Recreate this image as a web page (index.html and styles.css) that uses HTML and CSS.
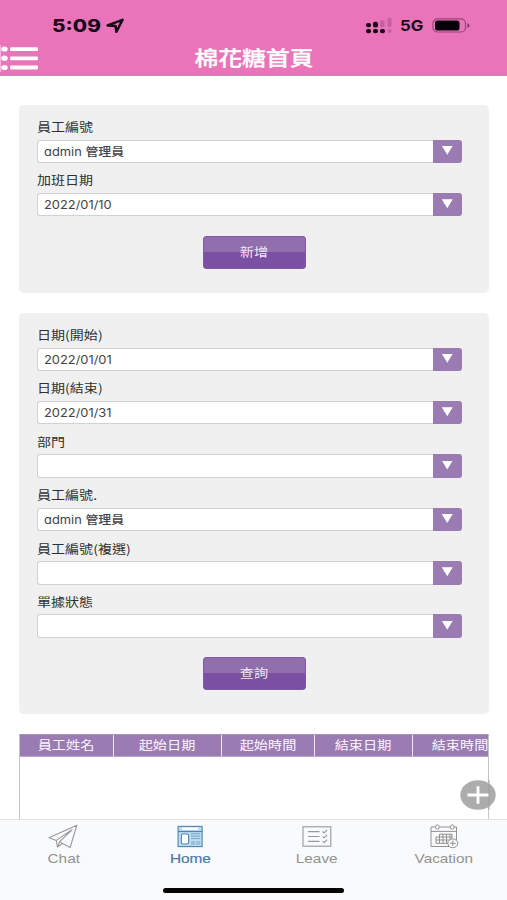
FILE: index.html
```html
<!DOCTYPE html>
<html lang="zh-Hant">
<head>
<meta charset="utf-8">
<meta name="viewport" content="width=device-width, initial-scale=1">
<title>棉花糖首頁</title>
<link rel="stylesheet" href="styles.css">
</head>
<body>
<div class="app">
  <header class="header">
    <div class="status">
      <span class="clock"><span class="wide">5:09</span></span>
      <svg class="location" width="20" height="16" viewBox="0 0 20 16"><path d="M1.6 7.4 16.6 1.8 10.4 13.8 9.6 8Z" fill="none" stroke="#180818" stroke-width="2.5" stroke-linejoin="round"/></svg>
      <svg class="signal" width="27" height="16" viewBox="0 0 27 16">
        <g fill="#180818"><rect x="0" y="5" width="5" height="4.2" rx="2"/><rect x="7" y="3.8" width="5" height="5.6" rx="2"/><rect x="0" y="11" width="5" height="4.2" rx="2"/><rect x="7" y="11" width="5" height="4.2" rx="2"/><rect x="14" y="11" width="5" height="4.2" rx="2"/></g>
        <g fill="#c660a2"><rect x="14" y="2.2" width="4.6" height="7" rx="1.5"/><rect x="21.5" y="0" width="4" height="9" rx="1.5"/><rect x="21.5" y="11" width="4" height="4" rx="2"/></g>
      </svg>
      <span class="network"><span class="wide">5G</span></span>
      <svg class="battery" width="38" height="15" viewBox="0 0 38 15"><rect x="1" y=".8" width="32.5" height="13.2" rx="4.5" fill="none" stroke="#9c4279" stroke-width="1.2"/><rect x="3" y="2.6" width="24.5" height="9.8" rx="2.5" fill="#08000a"/><path d="M35.5 5v5q2-1 2-2.5T35.5 5Z" fill="#7c3460"/></svg>
    </div>
    <div class="titlebar">
      <svg class="menu" width="38" height="27" viewBox="0 0 38 27"><path d="M.6 0v27" stroke="#f6bfe0"/><g fill="#fff"><ellipse cx="4.5" cy="4" rx="3.2" ry="2.6"/><ellipse cx="4.5" cy="13.2" rx="3.2" ry="2.6"/><ellipse cx="4.5" cy="22.5" rx="3.2" ry="2.6"/><rect x="10" y="2.2" width="28" height="3.8" rx="1.3"/><rect x="10" y="11.4" width="28" height="3.8" rx="1.3"/><rect x="10" y="20.6" width="28" height="3.8" rx="1.3"/></g></svg>
      <h1 class="title">棉花糖首頁</h1>
    </div>
  </header>
  <main class="content">
    <section class="panel panel-add">
      <div class="field"><div class="label">員工編號</div><div class="select"><div class="value"><span>admin <b>管理員</b></span></div><div class="toggle"></div></div></div>
      <div class="field"><div class="label">加班日期</div><div class="select"><div class="value"><span>2022/01/10</span></div><div class="toggle"></div></div></div>
      <button class="action"><span class="wide">新增</span></button>
    </section>
    <section class="panel panel-search">
      <div class="field"><div class="label">日期(開始)</div><div class="select"><div class="value"><span>2022/01/01</span></div><div class="toggle"></div></div></div>
      <div class="field"><div class="label">日期(結束)</div><div class="select"><div class="value"><span>2022/01/31</span></div><div class="toggle"></div></div></div>
      <div class="field"><div class="label">部門</div><div class="select"><div class="value"></div><div class="toggle"></div></div></div>
      <div class="field"><div class="label">員工編號.</div><div class="select"><div class="value"><span>admin <b>管理員</b></span></div><div class="toggle"></div></div></div>
      <div class="field"><div class="label">員工編號(複選)</div><div class="select"><div class="value"></div><div class="toggle"></div></div></div>
      <div class="field"><div class="label">單據狀態</div><div class="select"><div class="value"></div><div class="toggle"></div></div></div>
      <button class="action"><span class="wide">查詢</span></button>
    </section>
    <section class="table">
      <div class="row">
        <div class="cell"><span class="wide">員工姓名</span></div>
        <div class="cell"><span class="wide">起始日期</span></div>
        <div class="cell"><span class="wide">起始時間</span></div>
        <div class="cell"><span class="wide">結束日期</span></div>
        <div class="cell"><span class="wide">結束時間</span></div>
      </div>
    </section>
    <svg class="add" width="36" height="30" viewBox="0 0 36 30"><ellipse cx="18" cy="15" rx="17.7" ry="14.7" fill="#acacac"/><path d="M29 0v30" stroke="#999" stroke-width=".8"/><path d="M7.5 15h21M18 6.3v17.4" stroke="#fff" stroke-width="2.9"/></svg>
  </main>
  <footer class="footer">
    <nav class="tabs">
      <div class="tab">
        <svg width="30" height="26" viewBox="0 0 30 26" fill="none" stroke="#999" stroke-width="1.1" stroke-linejoin="round"><path d="M1 13.8 28.8 1.2 22.2 23.5 14.5 19.5 9.5 23 8.3 16.4ZM8.3 16.4 24 5.8 11.7 17.6 9.5 23M11.7 17.6 14.5 19.5"/></svg>
        <span class="wide">Chat</span>
      </div>
      <div class="tab active">
        <svg width="30" height="26" viewBox="0 0 30 26"><rect x="3.1" y="2.4" width="24" height="20.2" fill="#bcdcf2" stroke="#4f83b1" stroke-width="1.1"/><path d="M7 4.7h16" stroke="#fff" stroke-width="2.2"/><path d="M3 7.5h24.5" stroke="#4f83b1" stroke-width="1.2"/><rect x="6.4" y="10" width="7.2" height="10" rx="1.4" fill="#fff" stroke="#4f83b1" stroke-width="1.1"/><path d="M16 9.8h9M16 12.2h9M16 14.6h9M16 18h4M21.2 18h4M16 20h4M21.2 20h4" stroke="#6f9dc4" stroke-width=".9"/></svg>
        <span class="wide">Home</span>
      </div>
      <div class="tab">
        <svg width="30" height="26" viewBox="0 0 30 26" fill="none" stroke="#989898" stroke-width="1.1"><rect x="1" y="2.8" width="27.8" height="19.4"/><path d="M6 7.6h11.5M6 12.5h11.5M6 17.4h11.5M20.5 7.4l1.6 1.5 3-3M20.5 12.3l1.6 1.5 3-3M20.5 17.2l1.6 1.5 3-3"/></svg>
        <span class="wide">Leave</span>
      </div>
      <div class="tab">
        <svg width="30" height="26" viewBox="0 0 30 26" fill="none" stroke="#929292" stroke-width="1"><path d="M20 22.5H2V3h4.5M10.5 3h11M25 3h2.5v13M2 7.4h25.5"/><ellipse cx="8.4" cy="3" rx="1.8" ry="2.2"/><ellipse cx="23.3" cy="3" rx="1.8" ry="2.2"/><path d="M10.5 10.2H23M7 13H23M7 16H20M7 19.3H19M7 13v6.3M10.5 10.2v9.1M14 10.2v9.1M17.5 10.2v9.1M21 10.2v6M23 10.2V15"/><ellipse cx="23.8" cy="19.3" rx="5" ry="4.4" fill="#f8f8fa"/><path d="M20.8 19.3h6M23.8 16.7v5.2"/></svg>
        <span class="wide">Vacation</span>
      </div>
    </nav>
    <div class="indicator"></div>
  </footer>
</div>
</body>
</html>
```
FILE: styles.css
```css
* { box-sizing: border-box; }
body { margin: 0; background: #fff; font-family: Inter, "Noto Sans CJK TC", sans-serif; }
.app { width: 507px; height: 900px; display: flex; flex-direction: column; overflow: hidden; }
.wide { display: inline-block; transform: scaleX(1.18); white-space: nowrap; }

.header { height: 75.5px; flex: none; background: #e974b9; }
.status { height: 44px; padding: 17px 37px 0 51.5px; display: flex; align-items: flex-start; color: #180818; font-weight: 800; }
.clock { width: 54.5px; font-size: 17px; line-height: 18px; }
.clock .wide { transform: scaleX(1.22); transform-origin: left; }
.location { margin-top: 1px; }
.signal { margin-left: auto; margin-top: 1px; }
.network { width: 29px; margin-left: 7.5px; font-size: 14.5px; line-height: 18px; font-weight: 700; }
.network .wide { transform: scaleX(1.16); transform-origin: left; }
.battery { margin: 1px 0 0 3px; }
.titlebar { height: 31px; position: relative; display: flex; justify-content: center; }
.menu { position: absolute; left: 0; top: .8px; }
.title { margin: 0; color: #fff; font: 500 20px/28px "Noto Sans CJK TC", sans-serif; transform: scaleX(1.19); -webkit-text-stroke: .3px #fff; }

.content { flex: 1; min-height: 0; padding: 29.5px 18px 0 19px; position: relative; overflow: hidden; }
.panel { background: #f0f0f0; border-radius: 5px; padding: 12px 27.5px 0 17.5px; }
.panel-add { height: 188px; margin-bottom: 20px; }
.panel-search { height: 401px; }
.field { height: 53.4px; }
.label { height: 22.5px; width: max-content; color: #303030; font: 400 12px/19.5px "Noto Sans CJK TC", sans-serif; transform: scaleX(1.17); transform-origin: left; }
.select { height: 23.5px; display: flex; }
.value { flex: 1; padding-left: 6px; background: #fff; border: 1px solid #d2d2d2; border-right: 0; border-radius: 3px 0 0 3px; color: #444; font-size: 11.3px; line-height: 22px; white-space: pre; font-feature-settings: "cv11"; }
.value span { display: inline-block; transform: scaleX(1.14); transform-origin: left; }
.value b { font-weight: 500; }
.toggle { width: 28.5px; background: #9a7bb2; border-radius: 0 3px 3px 0; display: flex; align-items: center; justify-content: center; }
.toggle::before { content: ""; width: 11px; height: 9px; background: #fff; clip-path: polygon(0 0, 100% 0, 50% 100%); margin-top: -2px; }
.action { display: block; width: 103px; height: 33px; margin: 12.1px 0 0 166.5px; padding: 0 0 2px; border: 1px solid #8059a4; border-radius: 3px; background: linear-gradient(#916eac 0 49%, #7b4fa1 50%); color: #eee5f4; font: 400 12px/29px "Noto Sans CJK TC", sans-serif; }
.panel-search .action { margin-top: 11.6px; }

.table { margin-top: 20px; height: 120px; border: 1px solid #c8c2cc; border-top-color: #ab92bf; overflow: hidden; }
.row { height: 22px; display: grid; grid-template-columns: 94px 107.5px 93.5px 98px 95px; }
.cell { background: #9a7bb2; border-right: 1.5px solid #eee5f4; border-bottom: 1px solid #b9a5c8; color: #fbf6ff; text-align: center; font: 400 12px/20px "Noto Sans CJK TC", sans-serif; }
.add { position: absolute; right: 11.5px; bottom: 9px; }

.footer { height: 81px; flex: none; background: #f9fafc; border-top: 1px solid #e3e5e5; }
.tabs { height: 66px; display: grid; grid-template-columns: repeat(4, 1fr); padding-top: 4px; }
.tab { display: flex; flex-direction: column; align-items: center; color: #939393; font: 13px/16px "Liberation Sans", sans-serif; }
.tab .wide { margin-top: 1px; }
.tab.active { color: #4a79a8; -webkit-text-stroke: .2px; }
.indicator { width: 181px; height: 5px; margin: 2px auto 0; border-radius: 3px; background: #050505; }
```
